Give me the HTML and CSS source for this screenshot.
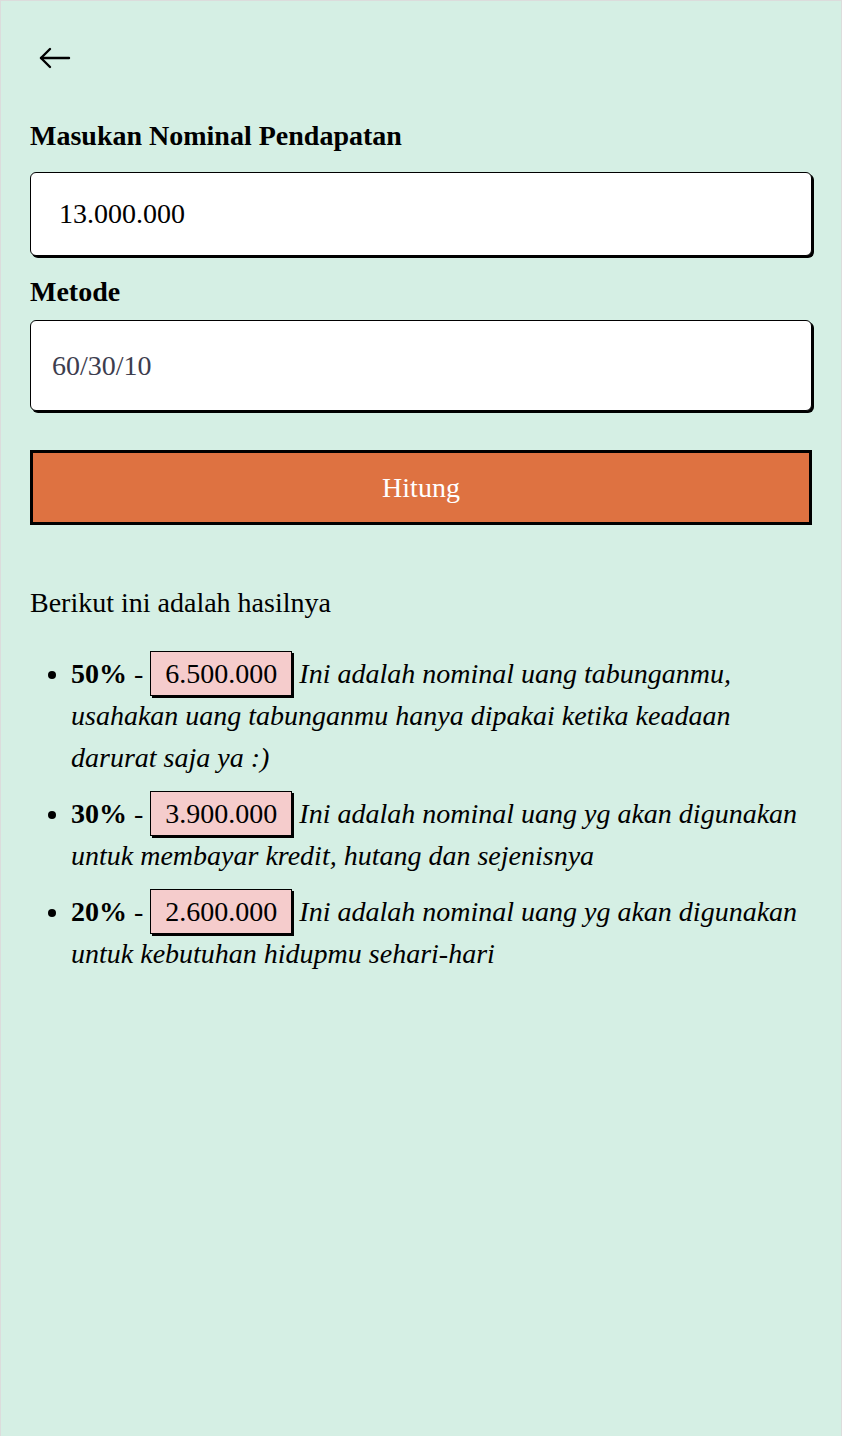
FILE: index.html
```html
<!DOCTYPE html>
<html lang="id">
<head>
<meta charset="utf-8">
<title>Hitung</title>
<link rel="stylesheet" href="styles.css">
</head>
<body>
<div class="page">
  <div class="back">
    <svg width="34" height="24" viewBox="0 0 34 24" fill="none" stroke="#000" stroke-width="2.4" stroke-linecap="round" stroke-linejoin="round">
      <path d="M3 12 H31"/>
      <path d="M12 3 L3 12 L12 21"/>
    </svg>
  </div>
  <label class="label">Masukan Nominal Pendapatan</label>
  <div class="field field-income">13.000.000</div>
  <label class="label label-method">Metode</label>
  <div class="field field-method">60/30/10</div>
  <button class="btn">Hitung</button>
  <p class="intro">Berikut ini adalah hasilnya</p>
  <ul class="results">
    <li><b>50%</b> - <span class="amount">6.500.000</span> <i>Ini adalah nominal uang tabunganmu, usahakan uang tabunganmu hanya dipakai ketika keadaan darurat saja ya :)</i></li>
    <li><b>30%</b> - <span class="amount">3.900.000</span> <i>Ini adalah nominal uang yg akan digunakan untuk membayar kredit, hutang dan sejenisnya</i></li>
    <li><b>20%</b> - <span class="amount">2.600.000</span> <i>Ini adalah nominal uang yg akan digunakan untuk kebutuhan hidupmu sehari-hari</i></li>
  </ul>
</div>
</body>
</html>
```
FILE: styles.css
```css
* { box-sizing: border-box; }
html, body { margin: 0; padding: 0; background: #fff; }
body { font-family: "Liberation Serif", "Times New Roman", serif; color: #000; }
.page {
  width: 842px;
  min-height: 1436px;
  background: #d5efe4;
  border: 1px solid #dcdcdc;
  border-bottom: none;
  padding: 40px 29px 40px 29px;
  display: flex;
  flex-direction: column;
}
.back { height: 34px; display: flex; align-items: center; padding-left: 8px; }
.label {
  display: block;
  font-weight: bold;
  font-size: 28px;
  margin-top: 45px;
  line-height: 32px;
}
.label-method { margin-top: 20px; }
.field {
  margin-top: 20px;
  background: #fff;
  border: 1px solid #000;
  border-radius: 6px;
  box-shadow: 2px 2px 0 #000;
  font-size: 28px;
  display: flex;
  align-items: center;
}
.field-income { height: 84px; padding-left: 28px; }
.field-method { height: 91px; padding-left: 21px; color: #3d3d4e; margin-top: 12px; }
.btn {
  margin-top: 39px;
  height: 75px;
  background: #de7241;
  border: 3px solid #000;
  color: #fff;
  font-family: inherit;
  font-size: 28px;
  width: 100%;
}
.intro { font-size: 28px; margin: 62px 0 0; line-height: 32px; }
.results {
  margin: 34px 0 0;
  padding-left: 41px;
  font-size: 28px;
  line-height: 42px;
}
.results li { margin-bottom: 14px; }
.amount {
  background: #f5cccc;
  border: 1px solid #000;
  box-shadow: 2px 2px 0 #000;
  padding: 6px 14px;
}
```
